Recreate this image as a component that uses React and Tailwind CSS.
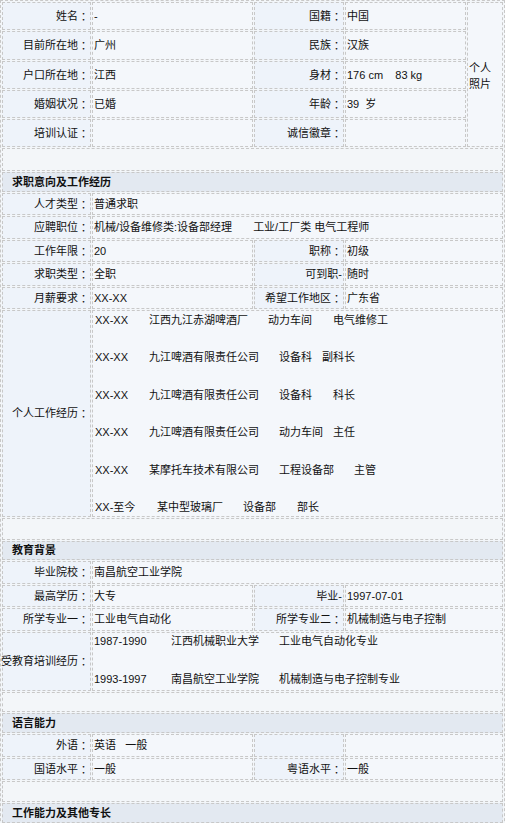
import React from "react";

const B = "border border-dashed border-[#c8c8c8]";

function L({ children, className = "" }) {
  let content = children;
  if (typeof children === "string" && children.endsWith("：")) {
    content = (
      <>
        {children.slice(0, -1)}
        <span className="font-['Noto_Sans_CJK_TC',sans-serif]">：</span>
      </>
    );
  }
  return (
    <div className={`${B} bg-[#eef3fa] flex items-center justify-end pr-px whitespace-nowrap ${className}`}>
      {content}
    </div>
  );
}

function V({ children, className = "" }) {
  return (
    <div className={`${B} bg-[#f4f7fb] flex items-center justify-start pl-px whitespace-pre ${className}`}>
      {children}
    </div>
  );
}

function Header({ children, className = "" }) {
  return (
    <div className={`${B} bg-[#e3e9f1] font-bold pl-[9px] flex items-center ${className}`}>{children}</div>
  );
}

function Spacer({ className = "" }) {
  return <div className={`${B} bg-[#f3f6f9] ${className}`} />;
}

const work = [
  ["XX-XX", "江西九江赤湖啤酒厂", "动力车间", "电气维修工", "w-[54px]", "w-[119px]", "w-[65px]"],
  ["XX-XX", "九江啤酒有限责任公司", "设备科", "副科长", "w-[54px]", "w-[130px]", "w-[43px]"],
  ["XX-XX", "九江啤酒有限责任公司", "设备科", "科长", "w-[54px]", "w-[130px]", "w-[54px]"],
  ["XX-XX", "九江啤酒有限责任公司", "动力车间", "主任", "w-[54px]", "w-[130px]", "w-[54px]"],
  ["XX-XX", "某摩托车技术有限公司", "工程设备部", "主管", "w-[54px]", "w-[130px]", "w-[75px]"],
  ["XX-至今", "某中型玻璃厂", "设备部", "部长", "w-[62px]", "w-[86px]", "w-[54px]"],
];

export default function App() {
  return (
    <div className="w-[505px] h-[823px] overflow-hidden bg-white">
      <div className="border border-dashed border-[#c8c8c8] p-px flex flex-col gap-px text-[11px] text-[#111] bg-[#f3f6f9] font-['Liberation_Sans','Noto_Sans_CJK_SC',sans-serif]">
        {/* Basic info block */}
        <div className="grid grid-cols-[89px_161px_90px_121px_36px] grid-rows-[28px_29px_28px_28px_28px] gap-px">
          <L className="col-start-1 row-start-1">姓名：</L>
          <V className="col-start-2 row-start-1">-</V>
          <L className="col-start-3 row-start-1">国籍：</L>
          <V className="col-start-4 row-start-1">中国</V>

          <L className="col-start-1 row-start-2">目前所在地：</L>
          <V className="col-start-2 row-start-2">广州</V>
          <L className="col-start-3 row-start-2">民族：</L>
          <V className="col-start-4 row-start-2">汉族</V>

          <L className="col-start-1 row-start-3">户口所在地：</L>
          <V className="col-start-2 row-start-3">江西</V>
          <L className="col-start-3 row-start-3">身材：</L>
          <V className="col-start-4 row-start-3">{"176 cm    83 kg"}</V>

          <L className="col-start-1 row-start-4">婚姻状况：</L>
          <V className="col-start-2 row-start-4">已婚</V>
          <L className="col-start-3 row-start-4">年龄：</L>
          <V className="col-start-4 row-start-4">{"39  岁"}</V>

          <L className="col-start-1 row-start-5">培训认证：</L>
          <V className="col-start-2 row-start-5"></V>
          <L className="col-start-3 row-start-5">诚信徽章：</L>
          <V className="col-start-4 row-start-5"></V>

          <div className={`${B} bg-[#f4f7fb] col-start-5 row-start-1 row-span-5 flex items-center pl-px leading-[16px]`}>
            <div className="pt-[2px]">
              个人
              <br />
              照片
            </div>
          </div>
        </div>

        <Spacer className="h-[23px]" />
        <Header className="h-[20px]">求职意向及工作经历</Header>

        <div className="flex gap-px h-[22px]">
          <L className="w-[89px]">人才类型：</L>
          <V className="flex-1">普通求职</V>
        </div>
        <div className="flex gap-px h-[23px]">
          <L className="w-[89px]">应聘职位：</L>
          <V className="flex-1">
            <span>机械/设备维修类:设备部经理</span>
            <span className="ml-[21px]">工业/工厂类 电气工程师</span>
          </V>
        </div>
        <div className="flex gap-px h-[22px]">
          <L className="w-[89px]">工作年限：</L>
          <V className="w-[161px]">20</V>
          <L className="w-[90px]">职称：</L>
          <V className="flex-1">初级</V>
        </div>
        <div className="flex gap-px h-[23px]">
          <L className="w-[89px]">求职类型：</L>
          <V className="w-[161px]">全职</V>
          <L className="w-[90px]">可到职-</L>
          <V className="flex-1">随时</V>
        </div>
        <div className="flex gap-px h-[22px]">
          <L className="w-[89px]">月薪要求：</L>
          <V className="w-[161px]">XX-XX</V>
          <L className="w-[90px]">希望工作地区：</L>
          <V className="flex-1">广东省</V>
        </div>
        <div className="flex gap-px h-[207px]">
          <L className="w-[89px]">个人工作经历：</L>
          <div className={`${B} bg-[#f4f7fb] flex-1 flex flex-col pl-[2px] whitespace-nowrap`}>
            {work.map((w, i) => (
              <div key={i} className="h-[37.4px] leading-[18px] flex shrink-0">
                <span className={w[4]}>{w[0]}</span>
                <span className={w[5]}>{w[1]}</span>
                <span className={w[6]}>{w[2]}</span>
                <span>{w[3]}</span>
              </div>
            ))}
          </div>
        </div>

        <Spacer className="h-[22px]" />
        <Header className="h-[19px]">教育背景</Header>

        <div className="flex gap-px h-[23px]">
          <L className="w-[89px]">毕业院校：</L>
          <V className="flex-1">南昌航空工业学院</V>
        </div>
        <div className="flex gap-px h-[22px]">
          <L className="w-[89px]">最高学历：</L>
          <V className="w-[161px]">大专</V>
          <L className="w-[90px]">毕业-</L>
          <V className="flex-1">1997-07-01</V>
        </div>
        <div className="flex gap-px h-[23px]">
          <L className="w-[89px]">所学专业一：</L>
          <V className="w-[161px]">工业电气自动化</V>
          <L className="w-[90px]">所学专业二：</L>
          <V className="flex-1">机械制造与电子控制</V>
        </div>
        <div className="flex gap-px h-[59px]">
          <L className="w-[89px]">受教育培训经历：</L>
          <div className={`${B} bg-[#f4f7fb] flex-1 flex flex-col pl-px whitespace-nowrap`}>
            <div className="h-[38px] leading-[16px] flex shrink-0">
              <span className="w-[77px]">1987-1990</span>
              <span className="w-[108px]">江西机械职业大学</span>
              <span>工业电气自动化专业</span>
            </div>
            <div className="leading-[16px] flex shrink-0">
              <span className="w-[77px]">1993-1997</span>
              <span className="w-[108px]">南昌航空工业学院</span>
              <span>机械制造与电子控制专业</span>
            </div>
          </div>
        </div>

        <Spacer className="h-[20px]" />
        <Header className="h-[20px]">语言能力</Header>

        <div className="flex gap-px h-[23px]">
          <L className="w-[89px]">外语：</L>
          <V className="w-[161px]">{"英语   一般"}</V>
          <L className="w-[90px]"></L>
          <V className="flex-1"></V>
        </div>
        <div className="flex gap-px h-[22px]">
          <L className="w-[89px]">国语水平：</L>
          <V className="w-[161px]">一般</V>
          <L className="w-[90px]">粤语水平：</L>
          <V className="flex-1">一般</V>
        </div>

        <Spacer className="h-[21px]" />
        <Header className="h-[20px]">工作能力及其他专长</Header>
        <Spacer className="h-[60px]" />
      </div>
    </div>
  );
}
